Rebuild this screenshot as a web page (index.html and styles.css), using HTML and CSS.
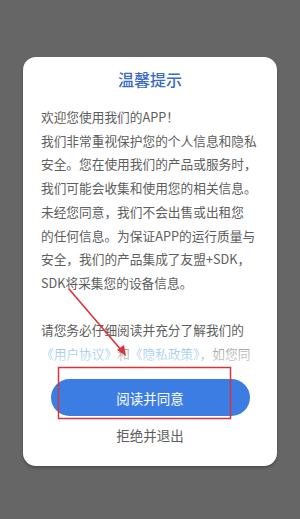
FILE: index.html
```html
<!DOCTYPE html>
<html lang="zh-CN">
<head>
    <meta charset="UTF-8">
    <meta name="viewport" content="width=device-width, initial-scale=1.0">
    <title>温馨提示</title>
    <link rel="stylesheet" href="styles.css">
</head>
<body>
    <div class="dialog">
        <div class="dialog-title">温馨提示</div>

        <div class="dialog-content">
            <p>欢迎您使用我们的APP！<br>
            我们非常重视保护您的个人信息和隐私<br>
            安全。您在使用我们的产品或服务时，<br>
            我们可能会收集和使用您的相关信息。<br>
            未经您同意，我们不会出售或出租您<br>
            的任何信息。为保证APP的运行质量与<br>
            安全，我们的产品集成了友盟+SDK，<br>
            SDK将采集您的设备信息。</p>
            <p class="gap">请您务必仔细阅读并充分了解我们的<br>
            <span class="link">《用户协议》</span>和<span class="link">《隐私政策》</span>，如您同</p>
        </div>

        <button class="btn-agree">阅读并同意</button>
        <div class="btn-refuse">拒绝并退出</div>
    </div>

    <!-- red marks drawn on top of the screenshot -->
    <svg class="marks" width="300" height="519" viewBox="0 0 300 519">
        <line x1="69" y1="289" x2="122" y2="351" stroke="#d8343a" stroke-width="1.6"/>
        <polygon points="126,356 117,350 124,345" fill="#d8343a"/>
        <rect x="58.5" y="367.5" width="172" height="51" fill="none" stroke="#d8343a" stroke-width="1.5"/>
    </svg>
</body>
</html>
```

FILE: styles.css
```css
body {
    margin: 0;
    padding: 0;
    background-color: #666;
    font-family: "Noto Sans CJK SC", "Noto Sans", sans-serif;
    height: 519px;
    overflow: hidden;
}

.dialog {
    width: 254px;
    height: 409px;
    margin: 57px 0 0 23px;
    background-color: #fff;
    border-radius: 13px;
    box-shadow: 0 2px 3px rgba(0, 0, 0, 0.25);
    display: flex;
    flex-direction: column;
    align-items: center;
}

.dialog-title {
    margin-top: 11px;
    font-size: 16px;
    line-height: 22px;
    font-weight: 500;
    color: #3a6cc2;
}

.dialog-content {
    position: relative;
    align-self: stretch;
    margin-top: 15px;
    padding: 0 0 0 18px;
    height: 262px;
    overflow: hidden;
    font-size: 12.7px;
    line-height: 23.7px;
    color: #5e5e5e;
    white-space: nowrap;
}

.dialog-content p {
    margin: 0;
}

.dialog-content .gap {
    margin-top: 23.7px;
}

.link {
    color: #4a9be0;
}

.dialog-content::after {
    content: "";
    position: absolute;
    left: 0;
    right: 0;
    bottom: 0;
    height: 24px;
    background: linear-gradient(rgba(255, 255, 255, 0.35), rgba(255, 255, 255, 0.8));
}

.btn-agree {
    margin-top: 12px;
    width: 199px;
    height: 37px;
    border: none;
    border-radius: 19px;
    background-color: #3b7de3;
    color: #fff;
    font-family: inherit;
    font-size: 13.5px;
    padding: 0;
}

.btn-refuse {
    margin-top: 9px;
    font-size: 13.5px;
    line-height: 20px;
    color: #5e5e5e;
}

.marks {
    position: absolute;
    left: 0;
    top: 0;
}
```
